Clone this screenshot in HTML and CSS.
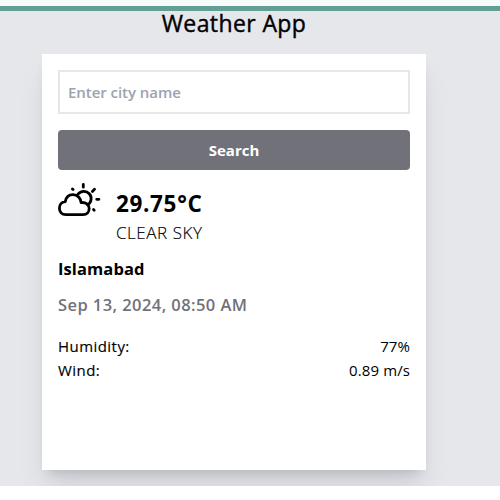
FILE: index.html
```html
<!DOCTYPE html>
<html lang="en">
<head>
<meta charset="utf-8">
<title>Weather App</title>
<link rel="stylesheet" href="styles.css">
</head>
<body>
<header class="topbar"></header>
<main class="page">
  <h1 class="title">Weather App</h1>
  <section class="card">
    <input class="city-input" type="text" placeholder="Enter city name">
    <button class="search">Search</button>
    <div class="current">
      <svg class="icon" viewBox="58 180 44 40" fill="none" stroke="#000" stroke-width="2.8" stroke-linecap="round">
        <path d="M65.8 214.7C61.8 214.7 59.4 211.8 59.4 208.3C59.4 204.7 61.8 202 65.2 201.7C66 197.4 69 194.6 73 194.6C77.6 194.6 80.8 198.2 81.1 202.6C85.8 202 89.2 204.8 89.2 208.6C89.2 212.2 86.8 214.7 83.2 214.7Z" stroke-linejoin="round"/>
        <path d="M78 194.2a7.3 7.3 0 1 1 9.5 10.7M83.3 184.4v2.8M92.4 191.4l2.1-2.1M96.7 199.3h2.2M93.5 209.6l.7.7M72.4 188.9l.7.7"/>
      </svg>
      <div>
        <div class="temp">29.75°C</div>
        <div class="sky">CLEAR SKY</div>
      </div>
    </div>
    <div class="city">Islamabad</div>
    <div class="date">Sep 13, 2024, 08:50 AM</div>
    <dl class="stats">
      <div class="row"><dt class="label">Humidity:</dt><dd class="value">77%</dd></div>
      <div class="row"><dt class="label">Wind:</dt><dd class="value">0.89 m/s</dd></div>
    </dl>
  </section>
</main>
<footer class="bottom"></footer>
</body>
</html>
```
FILE: styles.css
```css
* { box-sizing: border-box; margin: 0; padding: 0; }
body { font-family: "Open Sans", "Noto Sans", sans-serif; background: #fff; color: #000; overflow: hidden; }
.topbar { height: 11px; background: #f5fbf9; border-bottom: 5px solid #649c96; }
.page { height: 475px; background: #e5e7eb; padding-left: 42px; }
.bottom { position: relative; height: 14px; background: #fff; }
.title {
  width: 384px; height: 43px; text-align: center; font-size: 23px; font-weight: 400; line-height: 25px;
  letter-spacing: .4px; -webkit-text-stroke: .4px #000;
}
.card {
  width: 384px; height: 416px; padding: 16px; background: #fff;
  box-shadow: 0 20px 25px -5px rgba(113,113,122,.2), 0 8px 10px -6px rgba(113,113,122,.3);
}
.city-input {
  display: block; width: 100%; height: 44px; padding: 0 8px; border: 2px solid #e5e7eb;
  font: 600 15px "Open Sans", sans-serif; outline: 0;
}
.city-input::placeholder { color: #9ca3af; opacity: 1; letter-spacing: -.05px; }
.search {
  display: block; width: 100%; height: 40px; margin-top: 16px; border: 0; border-radius: 4px;
  background: #71717a; color: #fff; font: 700 15px "Open Sans", sans-serif;
}
.current { display: flex; gap: 14px; margin-top: 10px; height: 65px; }
.icon { width: 44px; height: 40px; }
.temp { margin-top: 8px; font-size: 22.5px; font-weight: 700; line-height: 32px; letter-spacing: .65px; }
.sky { font-size: 17px; font-weight: 300; line-height: 26px; letter-spacing: .55px; -webkit-text-stroke: .15px #000; }
.city { margin-top: 10px; font-size: 16.5px; font-weight: 700; line-height: 28px; letter-spacing: .1px; }
.date { margin-top: 8px; font-size: 16.5px; font-weight: 600; line-height: 28px; color: #71717a; letter-spacing: .43px; }
.stats { margin-top: 15px; font-size: 15px; line-height: 24px; }
.row { display: flex; justify-content: space-between; }
.label { letter-spacing: .45px; -webkit-text-stroke: .15px #000; }
.value { letter-spacing: .1px; }
```
